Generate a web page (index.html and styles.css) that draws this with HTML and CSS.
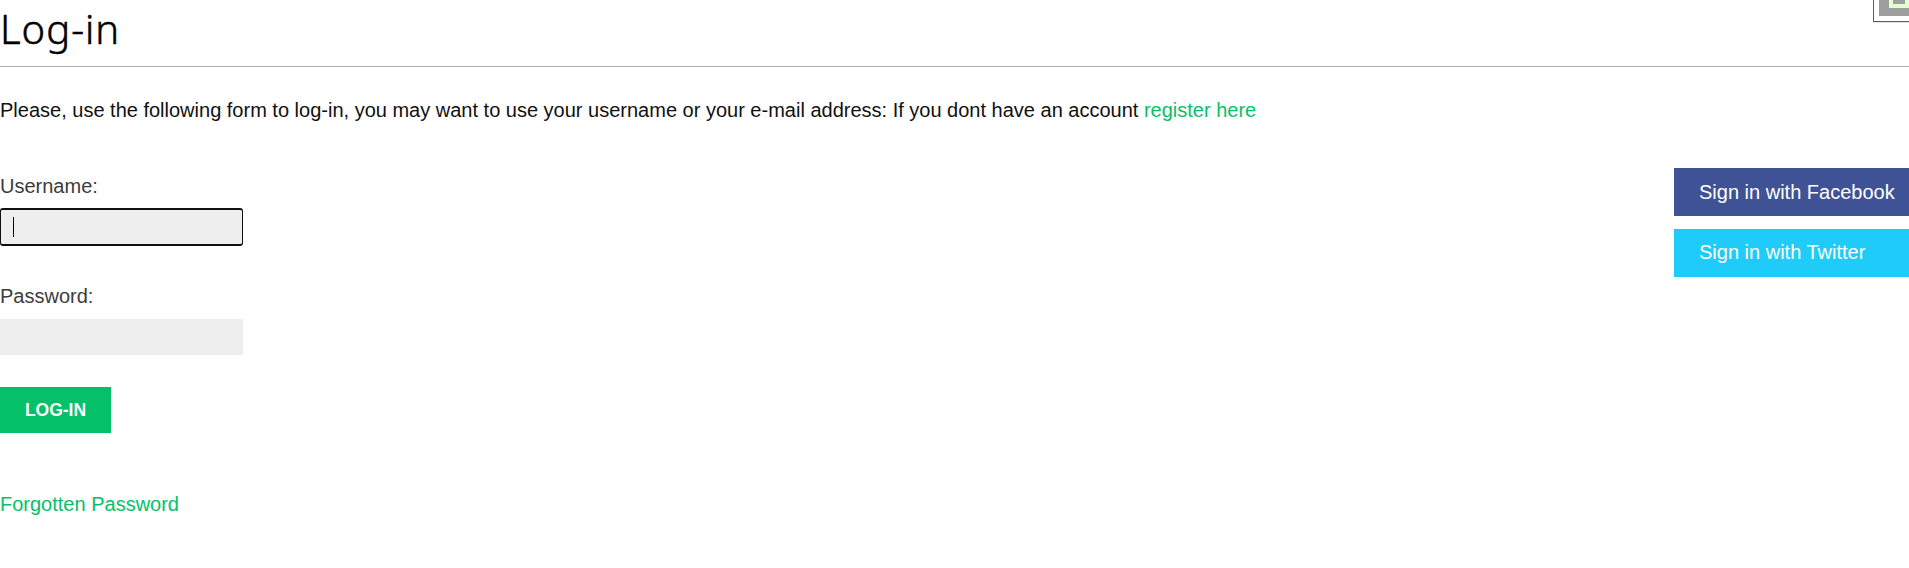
FILE: index.html
```html
<!DOCTYPE html>
<html lang="en">
<head>
<meta charset="utf-8">
<title>Log-in</title>
<link rel="stylesheet" href="styles.css">
</head>
<body>
<svg class="corner-widget" width="36" height="24" viewBox="0 0 36 24" aria-hidden="true">
  <path d="M0 0H36V23H0Z" fill="#e4e4e4"/>
  <path d="M0 0H36V22H0Z" fill="#5c5c5c"/>
  <path d="M1 0H36V21H1Z" fill="#fff"/>
  <path d="M6 0H36V16H6Z" fill="#9e9e9e"/>
  <path d="M16 0H36V8H16Z" fill="#e3ffd0"/>
  <path d="M20 0H32V4H20Z" fill="#9e9e9e"/>
</svg>
<header class="page-header"><h1 class="title">Log-in</h1></header>
<p class="intro">Please, use the following form to log-in, you may want to use your username or your e-mail address: If you dont have an account <a class="link" href="#">register here</a></p>
<main class="columns">
  <form class="login">
    <label class="label" for="user">Username:</label>
    <div class="field focused" id="user"><span class="caret"></span></div>
    <label class="label" for="pass">Password:</label>
    <div class="field" id="pass"></div>
    <button class="submit" type="button">LOG-IN</button>
    <a class="link forgot" href="#">Forgotten Password</a>
  </form>
  <aside class="social">
    <a class="social-button facebook" href="#">Sign in with Facebook</a>
    <a class="social-button twitter" href="#">Sign in with Twitter</a>
  </aside>
</main>
</body>
</html>
```
FILE: styles.css
```css
* { box-sizing: border-box; }
body {
  margin: 0;
  height: 568px;
  overflow: hidden;
  background: #fff;
  color: #111;
  font: 20px/30px "Liberation Sans", Arial, sans-serif;
}
.corner-widget { position: absolute; top: 0; right: 0; }
.page-header { height: 67px; border-bottom: 1px solid #b4b4b4; }
.title {
  margin: 0;
  padding-top: 4px;
  color: #000;
  font: 300 40px/50px "Noto Sans", sans-serif;
  letter-spacing: 1px;
  -webkit-text-stroke: 0.5px #000;
}
.intro { margin: 28px 0 43px; }
.link { color: #06c167; text-decoration: none; }
.columns { display: flex; justify-content: space-between; align-items: flex-start; }
.login { display: flex; flex-direction: column; align-items: flex-start; padding-top: 3px; }
.label { color: #3c3c3c; margin: 0 0 38px; height: 0; }
.field {
  width: 243px;
  height: 36px;
  margin-bottom: 32px;
  background: #eee;
}
.focused {
  height: 38px;
  margin: -1px 0 35px;
  padding: 7px 12px;
  border: solid #101010;
  border-width: 2px 1px;
  border-radius: 3px;
}
.caret { display: block; width: 1px; height: 20px; background: #000; }
.submit {
  width: 111px;
  height: 46px;
  padding: 0;
  border: 0;
  background: #04c169;
  color: #fff;
  font: bold 17.5px/20px "Liberation Sans", Arial, sans-serif;
}
.forgot { margin-top: 56px; }
.social { display: flex; flex-direction: column; gap: 13px; width: 235px; }
.social-button {
  height: 48px;
  padding-left: 25px;
  color: #fff;
  line-height: 48px;
  text-decoration: none;
  white-space: nowrap;
}
.facebook { background: #405296; }
.twitter { background: #1fcbf8; line-height: 46px; }
```
